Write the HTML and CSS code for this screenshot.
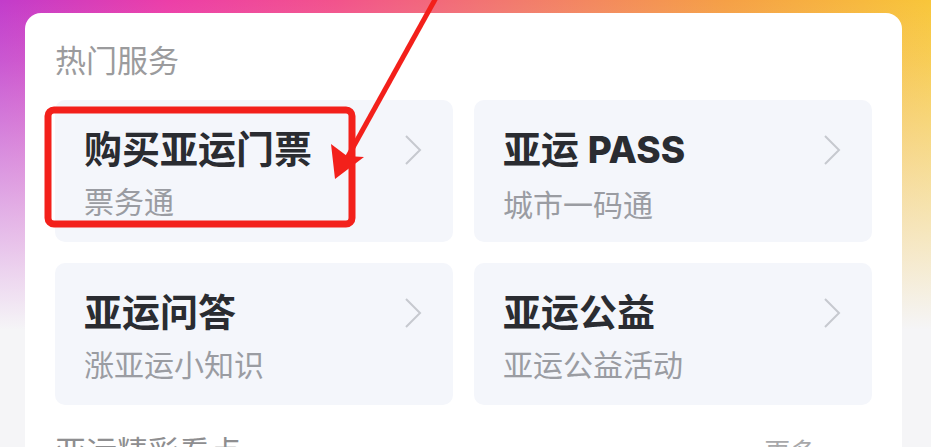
FILE: index.html
```html
<!DOCTYPE html>
<html lang="zh-CN">
<head>
    <meta charset="UTF-8">
    <meta name="viewport" content="width=device-width, initial-scale=1.0">
    <title>热门服务</title>
    <link rel="stylesheet" href="styles.css">
</head>
<body>
    <div id="page">
        <div id="card">
            <h2 class="section-title">热门服务</h2>
            <div id="services">
                <div class="tile">
                    <div class="tile-text">
                        <p class="tile-name">购买亚运门票</p>
                        <p class="tile-sub">票务通</p>
                    </div>
                    <svg class="chevron" viewBox="0 0 18 32"><polyline points="2,2 16,16 2,30"/></svg>
                </div>
                <div class="tile">
                    <div class="tile-text">
                        <p class="tile-name">亚运 <span class="latin">PASS</span></p>
                        <p class="tile-sub">城市一码通</p>
                    </div>
                    <svg class="chevron" viewBox="0 0 18 32"><polyline points="2,2 16,16 2,30"/></svg>
                </div>
                <div class="tile">
                    <div class="tile-text">
                        <p class="tile-name">亚运问答</p>
                        <p class="tile-sub">涨亚运小知识</p>
                    </div>
                    <svg class="chevron" viewBox="0 0 18 32"><polyline points="2,2 16,16 2,30"/></svg>
                </div>
                <div class="tile">
                    <div class="tile-text">
                        <p class="tile-name">亚运公益</p>
                        <p class="tile-sub">亚运公益活动</p>
                    </div>
                    <svg class="chevron" viewBox="0 0 18 32"><polyline points="2,2 16,16 2,30"/></svg>
                </div>
            </div>
            <div id="next-section">
                <h2 class="section-title">亚运精彩看点</h2>
                <span class="more">更多 ›</span>
            </div>
        </div>
    </div>

    <!-- 标注：红框和箭头 -->
    <svg id="markup" viewBox="0 0 931 447">
        <rect x="48" y="110" width="304" height="114" rx="6" ry="6"/>
        <line x1="437" y1="-4" x2="346" y2="160"/>
        <polygon points="335,179 331,144 347,156 364,157"/>
    </svg>
</body>
</html>
```

FILE: styles.css
```css
body {
    margin: 0;
    padding: 0;
    width: 931px;
    height: 447px;
    overflow: hidden;
    position: relative;
    font-family: 'Noto Sans CJK SC', 'Noto Sans', sans-serif;
    background:
        linear-gradient(180deg, rgba(245, 245, 247, 0) 0px, rgba(245, 245, 247, 0.15) 60px, #f5f5f7 330px),
        linear-gradient(90deg, #c23ccb 0%, #ec3ea8 18%, #f2538c 36%, #f27c6c 56%, #f5a046 78%, #f8c63a 100%);
}

#page {
    padding: 13px 29px 0 25px;
}

#card {
    background-color: #fff;
    border-radius: 16px;
    padding: 26px 30px 0 30px;
    height: 460px;
}

.section-title {
    margin: 0;
    font-size: 31px;
    line-height: 40px;
    font-weight: 400;
    color: #9b9b9d;
}

#services {
    display: grid;
    grid-template-columns: 1fr 1fr;
    gap: 21px;
    margin-top: 21px;
}

.tile {
    display: flex;
    justify-content: space-between;
    align-items: flex-start;
    background-color: #f4f6fb;
    border-radius: 10px;
    padding: 24px 31px 20px 29px;
    height: 98px;
}

.tile-name {
    margin: 0;
    font-size: 38px;
    line-height: 46px;
    font-weight: 700;
    color: #2a2c31;
}

.tile-name .latin {
    font-family: 'Inter', 'Noto Sans', sans-serif;
    font-weight: 800;
    font-size: 37px;
}

.tile-sub {
    margin: 10px 0 0 0;
    font-size: 30px;
    line-height: 40px;
    color: #9a9ca2;
}

.chevron {
    width: 18px;
    height: 32px;
    margin-top: 10px;
    fill: none;
    stroke: #c6c9cf;
    stroke-width: 2;
}

#next-section {
    display: flex;
    justify-content: space-between;
    align-items: center;
    margin-top: 25px;
}

#next-section .section-title {
    color: #8e8e90;
}

.more {
    font-size: 26px;
    color: #a8a8aa;
    margin-right: 42px;
}

#markup {
    position: absolute;
    left: 0;
    top: 0;
    width: 931px;
    height: 447px;
    pointer-events: none;
}

#markup rect {
    fill: none;
    stroke: #f3201b;
    stroke-width: 7;
}

#markup line {
    stroke: #f3201b;
    stroke-width: 5;
}

#markup polygon {
    fill: #f3201b;
}
```
